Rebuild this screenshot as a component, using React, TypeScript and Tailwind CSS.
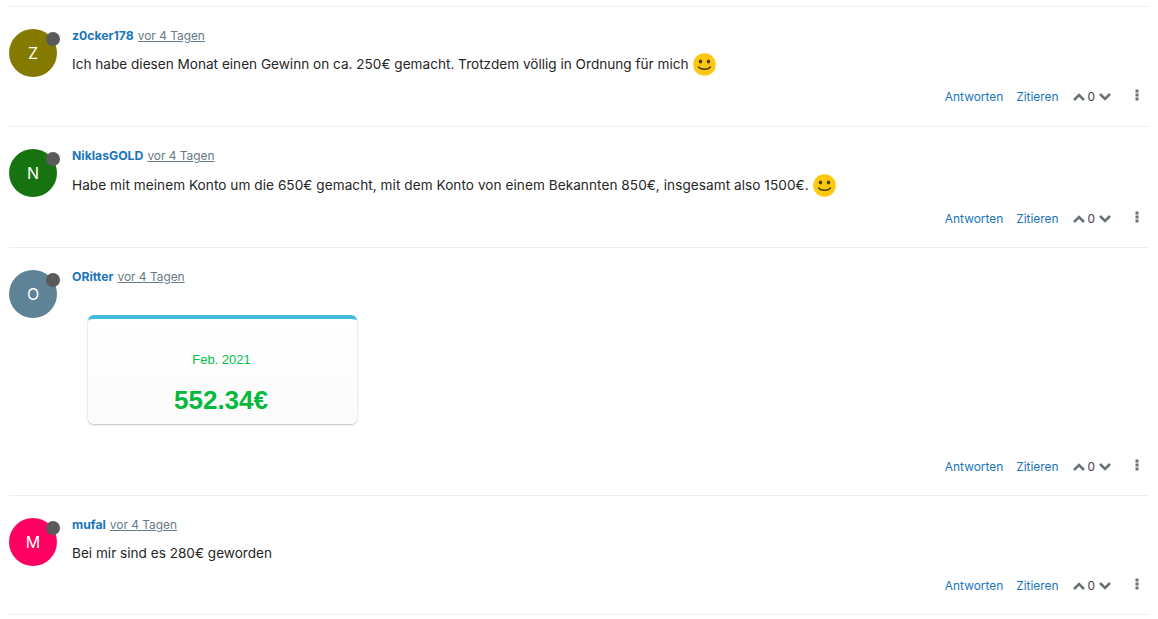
import React from "react";

function Smiley() {
  return (
    <svg width="23" height="23" viewBox="0 0 23 23" className="inline-block align-middle ml-[4px] -mt-[1px]">
      <circle cx="11.5" cy="11.5" r="11.3" fill="#fdc80f" />
      <ellipse cx="7.5" cy="8.6" rx="1.7" ry="2" fill="#4a3a12" />
      <ellipse cx="15.5" cy="8.6" rx="1.7" ry="2" fill="#4a3a12" />
      <path d="M5.5 14 C8 17 15 17 17.5 14" fill="none" stroke="#4a3a12" strokeWidth="1.4" strokeLinecap="round" />
    </svg>
  );
}

function Chevron({ up }: { up?: boolean }) {
  return (
    <svg width="12" height="8" viewBox="0 0 12 8" className="block">
      <path d={up ? "M1 7 L6 2 L11 7" : "M1 1 L6 6 L11 1"} fill="none" stroke="#687279" strokeWidth="2.6" />
    </svg>
  );
}

function Post({
  initial,
  color,
  name,
  contentH,
  bottom,
  children,
}: {
  initial: string;
  color: string;
  name: string;
  contentH: string;
  bottom: string;
  children: React.ReactNode;
}) {
  return (
    <div className={`flex border-b border-[#eceeef] pt-[22px] ${bottom}`}>
      <div className="relative w-[48px] h-[48px] shrink-0">
        <div className={`w-[48px] h-[48px] rounded-full flex items-center justify-center text-white text-[16px] ${color}`}>
          {initial}
        </div>
        <div className="absolute top-[3px] right-[-3px] w-[14px] h-[14px] rounded-full bg-[#5a5a5a]" />
      </div>
      <div className="flex-1 ml-[15px] flex flex-col">
        <div className="h-[14px] flex items-center leading-[14px]">
          <span className="text-[12.24px] font-bold text-[#1b75bb]">{name}</span>
          <span className="ml-[4px] text-[11.9px] text-[#687a86] underline">vor 4 Tagen</span>
        </div>
        <div className={`${contentH} text-[13.6px] text-[#262626]`}>{children}</div>
        <div className="flex items-center justify-end h-[14px] text-[11.9px] pr-[10px]">
          <span className="text-[#1b75bb]">Antworten</span>
          <span className="text-[#1b75bb] ml-[13px]">Zitieren</span>
          <span className="ml-[15px]"><Chevron up /></span>
          <span className="ml-[2px] mr-[4px] text-[#444]">0</span>
          <Chevron />
          <svg width="4" height="12" viewBox="0 0 4 12" className="ml-[24px] -mt-[4px]">
            <rect x="0.5" y="0.5" width="3" height="3" fill="#687279" />
            <rect x="0.5" y="4.5" width="3" height="3" fill="#687279" />
            <rect x="0.5" y="8.5" width="3" height="3" fill="#687279" />
          </svg>
        </div>
      </div>
    </div>
  );
}

export default function App() {
  return (
    <div className="bg-white w-[1158px] h-[619px] overflow-hidden pl-[9px] pr-[9px] pt-[6px] [font-family:Inter,'Liberation_Sans',sans-serif]">
      <div className="border-t border-[#eceeef]">
        <Post initial="Z" color="bg-[#857a00]" name="z0cker178" contentH="h-[47px] pt-[10px] leading-[22px]" bottom="pb-[22px]">
          Ich habe diesen Monat einen Gewinn on ca. 250€ gemacht. Trotzdem völlig in Ordnung für mich
          <Smiley />
        </Post>
        <Post initial="N" color="bg-[#17730f]" name="NiklasGOLD" contentH="h-[49px] pt-[11px] leading-[22px] tracking-[0.055px]" bottom="pb-[21px]">
          Habe mit meinem Konto um die 650€ gemacht, mit dem Konto von einem Bekannten 850€, insgesamt also 1500€.
          <Smiley />
        </Post>
        <Post initial="O" color="bg-[#5e8296]" name="ORitter" contentH="h-[176px] pt-[31px]" bottom="pb-[21px]">
          <div className="ml-[16px] w-[269px] h-[109px] rounded-[6px] border-t-[4px] border-t-[#3fbbe0] bg-gradient-to-b from-white to-[#fbfbfb] shadow-[0_1px_2px_rgba(0,0,0,0.25)] flex flex-col items-center [font-family:'Liberation_Sans',Arial,sans-serif]">
            <div className="mt-[33px] mr-[2px] text-[13px] leading-[16px] text-[#06c04f]">Feb. 2021</div>
            <div className="mt-[16px] mr-[3px] text-[26px] leading-[32px] font-bold text-[#06b93c]">552.34€</div>
          </div>
        </Post>
        <Post initial="M" color="bg-[#ff0062]" name="mufal" contentH="h-[47px] pt-[13px] leading-[17px]" bottom="pb-[21px]">
          Bei mir sind es 280€ geworden
        </Post>
      </div>
    </div>
  );
}
